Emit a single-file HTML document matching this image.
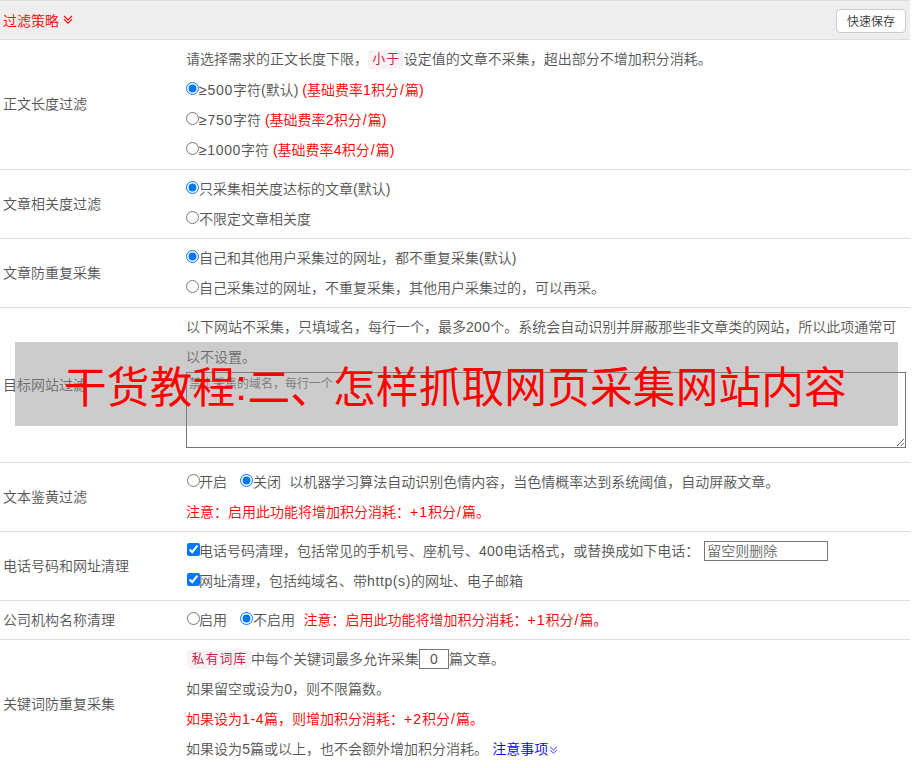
<!DOCTYPE html>
<html lang="zh-CN">
<head>
<meta charset="utf-8">
<title>过滤策略</title>
<style>
html,body{margin:0;padding:0;background:#fff;}
body{width:912px;height:768px;overflow:hidden;position:relative;font-family:"Liberation Sans","Noto Sans CJK SC",sans-serif;font-size:14px;color:#555;font-weight:350;}
table{border-collapse:collapse;width:910px;table-layout:fixed;position:absolute;left:0;top:0;}
td{padding:4px 3px;line-height:30px;border-bottom:1px solid #ddd;vertical-align:middle;white-space:nowrap;}
td.l{padding-left:3px;}
td.r{padding-left:3px;}
td.wrap{white-space:normal;}
tr.h td{background:#eee;border-top:1px solid #ddd;height:30px;padding:5px 3px 3px;line-height:30px;}
.red{color:#f00;}
.blue{color:#00f;}
.w{display:inline-block;text-align:center;white-space:nowrap;}
.tag{display:inline-block;box-sizing:border-box;height:19px;line-height:19px;background:#f9f2f4;color:#c7254e;border-radius:4px;font-size:12.6px;font-weight:400;text-align:center;vertical-align:0;position:relative;top:-1px;}
input[type=radio],input[type=checkbox]{margin:0;width:13px;height:13px;vertical-align:0;position:relative;}
.s1{left:1px;}
input[type=text]{box-sizing:content-box;border:1px solid #767676;border-radius:0;padding:1px 2px;margin:0;height:16px;font-size:14px;font-family:inherit;color:#555;background:#fff;outline:none;position:relative;top:0;}
input::placeholder,textarea::placeholder{color:#757575;opacity:1;}
.btn{position:absolute;left:836px;top:9px;height:20px;padding-top:2px;width:68px;border:1px solid #ccc;border-radius:4px;background:#fff;font-size:12px;line-height:20px;text-align:center;color:#333;}
textarea{display:block;box-sizing:content-box;width:714px;height:68px;border:1px solid #767676;border-radius:0;margin:0 0 10px;padding:4px 2px 2px;font-size:12px;line-height:15px;font-family:inherit;color:#555;outline:none;}
.ov{position:absolute;left:15px;top:342px;width:881px;padding-right:2px;height:84px;font-weight:400;background:rgba(136,136,136,0.43);color:#f00;font-size:42.67px;letter-spacing:.17px;line-height:93px;overflow:hidden;white-space:nowrap;text-align:center;}
</style>
</head>
<body>
<table>
<colgroup><col style="width:183px"><col style="width:727px"></colgroup>
<tr class="h"><td colspan="2"><span class="red">过滤策略</span></td></tr>
<tr><td class="l"><span style="position:relative;top:-1px">正文长度过滤</span></td><td class="r">
<div style="height:31px">请选择需求的正文长度下限，<span class="tag" style="width:35px;letter-spacing:1.6px;text-indent:1.6px;margin-left:.3px">小于</span><span style="margin-left:.4px">设定值的文章不采集，超出部分不增加积分消耗。</span></div>
<input type="radio" name="a" checked><span class="w" style="width:34px;letter-spacing:.7px">≥500</span>字符(默认) <span class="red">(基础费率<span class="w" style="width:8.1px">1</span>积分<span class="w" style="width:6px">/</span>篇)</span><br>
<input type="radio" name="a"><span class="w" style="width:34px;letter-spacing:.7px">≥750</span>字符 <span class="red">(基础费率<span class="w" style="width:8.1px">2</span>积分<span class="w" style="width:6px">/</span>篇)</span><br>
<input type="radio" name="a"><span class="w" style="width:42px;letter-spacing:.6px">≥1000</span>字符 <span class="red">(基础费率<span class="w" style="width:8.1px">4</span>积分<span class="w" style="width:6px">/</span>篇)</span>
</td></tr>
<tr><td class="l">文章相关度过滤</td><td class="r">
<input type="radio" name="b" checked>只采集相关度达标的文章(默认)<br>
<input type="radio" name="b">不限定文章相关度
</td></tr>
<tr><td class="l">文章防重复采集</td><td class="r">
<input type="radio" name="c" checked>自己和其他用户采集过的网址，都不重复采集(默认)<br>
<input type="radio" name="c">自己采集过的网址，不重复采集，其他用户采集过的，可以再采。
</td></tr>
<tr><td class="l">目标网站过滤</td><td class="r wrap">
以下网站不采集，只填域名，每行一个，最多<span class="w" style="width:24.3px;letter-spacing:.3px">200</span>个。系统会自动识别并屏蔽那些非文章类的网站，所以此项通常可以不设置。
<textarea placeholder="禁止采集的域名，每行一个"></textarea>
</td></tr>
<tr><td class="l">文本鉴黄过滤</td><td class="r">
<input type="radio" name="d" class="s1">开启<input type="radio" name="d" checked style="margin-left:13px">关闭<span style="margin-left:8.3px">以机器学习算法自动识别色情内容，当色情概率达到系统阈值，自动屏蔽文章。</span><br>
<span class="red">注意：启用此功能将增加积分消耗：<span class="w" style="width:18px;letter-spacing:1px">+1</span>积分<span class="w" style="width:6px">/</span>篇。</span>
</td></tr>
<tr><td class="l">电话号码和网址清理</td><td class="r">
<input type="checkbox" class="s1" checked>电话号码清理，包括常见的手机号、座机号、<span class="w" style="width:24.3px;letter-spacing:.3px">400</span>电话格式，或替换成如下电话：<input type="text" placeholder="留空则删除" style="width:118px;margin-left:5px"><br>
<input type="checkbox" class="s1" checked>网址清理，包括纯域名、带<span class="w" style="width:44px;letter-spacing:.6px">http(s)</span>的网址、电子邮箱
</td></tr>
<tr><td class="l">公司机构名称清理</td><td class="r">
<input type="radio" name="e" class="s1">启用<input type="radio" name="e" checked style="margin-left:13px">不启用<span class="red" style="margin-left:8.5px">注意：启用此功能将增加积分消耗：<span class="w" style="width:18px;letter-spacing:1px">+1</span>积分<span class="w" style="width:6px">/</span>篇。</span>
</td></tr>
<tr><td class="l">关键词防重复采集</td><td class="r">
<span class="tag" style="width:64px;letter-spacing:1.3px;text-indent:1.3px;margin-left:1px">私有词库</span>中每个关键词最多允许采集<input type="text" value="0" style="width:24px;text-align:center">篇文章。<br>
如果留空或设为<span class="w" style="width:8.1px">0</span>，则不限篇数。<br>
<span class="red">如果设为<span class="w" style="width:22px;letter-spacing:.6px">1-4</span>篇，则增加积分消耗：<span class="w" style="width:18px;letter-spacing:1px">+2</span>积分<span class="w" style="width:6px">/</span>篇。</span><br>
如果设为<span class="w" style="width:8.1px">5</span>篇或以上，也不会额外增加积分消耗。<span class="blue" style="margin-left:4.2px">注意事项</span>
</td></tr>
</table>
<svg width="10" height="10" viewBox="0 0 10 10" style="position:absolute;left:63px;top:15px"><path d="M1 1L5 5L9 1M1 4.2L5 8.2L9 4.2" stroke="#f00" stroke-width="1.1" fill="none"/></svg>
<svg width="9" height="9" viewBox="0 0 9 9" style="position:absolute;left:549px;top:746px"><path d="M1.2 0.8L4.5 4L7.8 0.8M1.2 4L4.5 7.2L7.8 4" stroke="#33f" stroke-width="1" fill="none"/></svg>
<div class="btn">快速保存</div>
<div class="ov">干货教程<span style="position:relative;top:-3px">:</span>二、怎样抓取网页采集网站内容</div>
</body>
</html>
